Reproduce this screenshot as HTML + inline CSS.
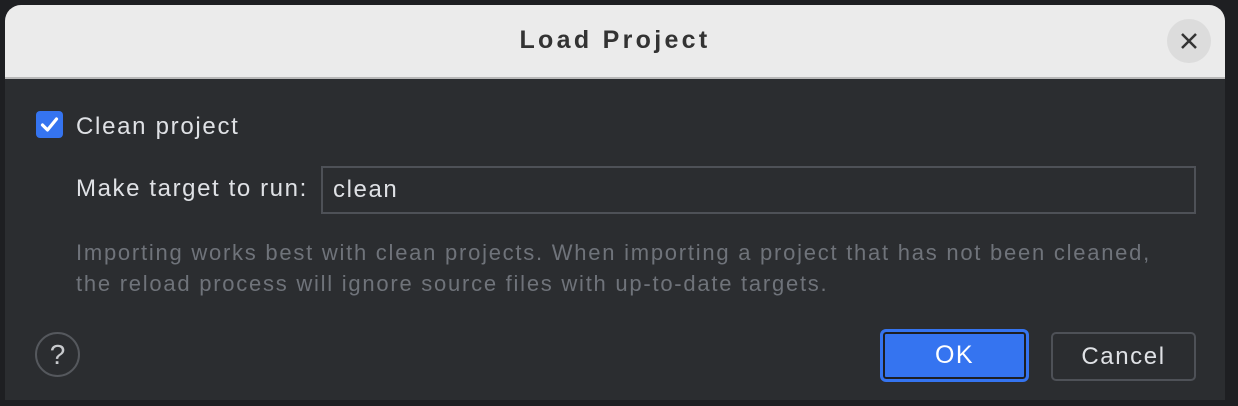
<!DOCTYPE html>
<html><head><style>
html,body{margin:0;padding:0;width:1238px;height:406px;background:#1e1f22;overflow:hidden;font-family:"Liberation Sans",sans-serif;}
.dlg{position:absolute;left:5px;top:5px;width:1220px;height:395px;background:#2b2d30;border-radius:16px 16px 0 0;overflow:hidden;}
.title{position:absolute;left:0;top:0;width:1220px;height:72px;background:#ebebeb;border-bottom:2px solid #b8b8b8;}
.title span{position:absolute;left:0;width:1220px;top:21px;text-align:center;font-weight:bold;font-size:25px;color:#333;letter-spacing:3.3px}
.close{position:absolute;left:1162px;top:14px;width:44px;height:44px;border-radius:50%;background:#dcdcdc;}
.t{position:absolute;white-space:nowrap;color:#dfe1e5;font-size:24px;letter-spacing:1.6px}
.cb{position:absolute;left:31px;top:106px;width:27px;height:27px;background:#3574f0;border-radius:4px;}
.inp{position:absolute;left:316px;top:161px;width:871px;height:44px;border:2px solid #4e5157;}
.hint{position:absolute;left:71px;color:#6f737a;font-size:22px;white-space:nowrap;letter-spacing:1.75px}
.help{position:absolute;left:30px;top:327px;width:41px;height:41px;border:2px solid #55585d;border-radius:50%;color:#c8cacd;font-size:28px;text-align:center;line-height:41px;}
.ok{position:absolute;left:875px;top:324px;width:143px;height:47px;background:#3574f0;border:3px solid #3574f0;border-radius:6px;box-shadow:inset 0 0 0 2px #1e1f22;color:#fff;font-size:25px;text-align:center;line-height:47px;letter-spacing:1.5px}
.cancel{position:absolute;left:1046px;top:327px;width:141px;height:45px;border:2px solid #4e5157;border-radius:5px;color:#dfe1e5;font-size:24px;text-align:center;line-height:45px;letter-spacing:1.6px}
</style></head><body>
<div class="dlg">
 <div class="title"><span>Load Project</span>
  <div class="close"><svg width="44" height="44"><path d="M15 15L29 29M29 15L15 29" stroke="#333" stroke-width="2.5"/></svg></div>
 </div>
 <div class="cb"><svg width="27" height="27"><path d="M6.5 14L11.5 19L20.5 8" stroke="#fff" stroke-width="3.2" fill="none" stroke-linecap="round" stroke-linejoin="round"/></svg></div>
 <div class="t" style="left:71px;top:108px;letter-spacing:1.7px">Clean project</div>
 <div class="t" style="left:71px;top:170px">Make target to run:</div>
 <div class="inp"><div class="t" style="left:10px;top:8px">clean</div></div>
 <div class="hint" style="top:235px">Importing works best with clean projects. When importing a project that has not been cleaned,</div>
 <div class="hint" style="top:266px">the reload process will ignore source files with up-to-date targets.</div>
 <div class="help">?</div>
 <div class="ok">OK</div>
 <div class="cancel">Cancel</div>
</div>
</body></html>
